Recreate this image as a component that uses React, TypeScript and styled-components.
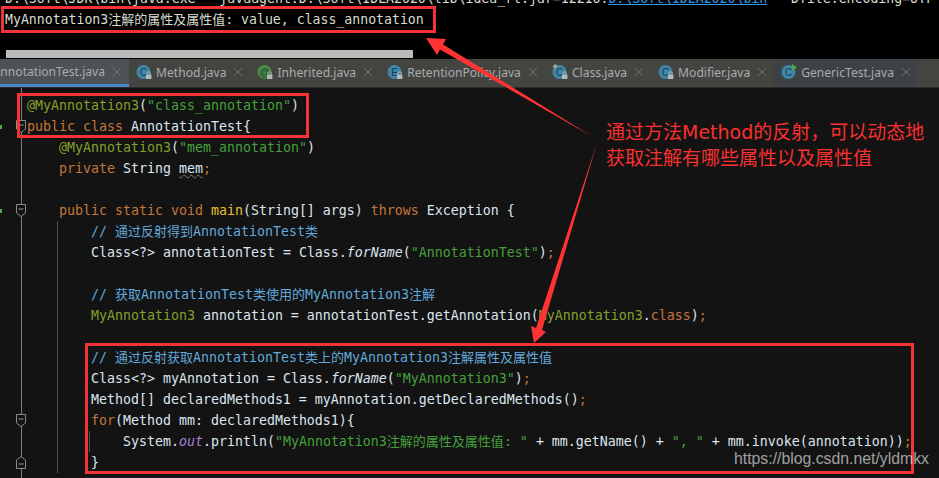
import React, { ReactNode } from "react";
import styled, { createGlobalStyle } from "styled-components";

const MONO = `"DejaVu Sans Mono", "Noto Sans CJK SC", monospace`;

const Global = createGlobalStyle`
  html, body {
    margin: 0;
    background: #131313;
  }
`;

type TabIconProps = {
  letter: string;
  color?: string;
  lock?: boolean;
  run?: boolean;
  pin?: boolean;
};

const TabIcon = ({ letter, color = "#3f86a8", lock, run, pin }: TabIconProps) => (
  <svg width="16" height="16" viewBox="0 0 16 16">
    <circle cx="7.5" cy="8" r="7" fill={color} />
    <text x="7.5" y="11.5" textAnchor="middle" fontFamily="Liberation Sans, sans-serif" fontSize="10" fill="#20394a">
      {letter}
    </text>
    {lock && (
      <g>
        <path d="M11 10.5V9.5a1.7 1.7 0 0 1 3.4 0v1" fill="none" stroke="#b5b8ba" strokeWidth="1" />
        <rect x="10" y="10.5" width="5.4" height="4.5" fill="#b5b8ba" />
      </g>
    )}
    {run && <path d="M11 0l5 3.5-5 3.5z" fill="#4ea84a" />}
    {pin && <path d="M0.5 2.5l2.5-2.5 3 2-3 3z" fill="#9a9da0" />}
  </svg>
);

const CloseIcon = () => (
  <svg width="8" height="8" viewBox="0 0 8 8">
    <path d="M0 0l8 8M8 0l-8 8" stroke="#6d7072" strokeWidth="1" />
  </svg>
);

const FoldMark = ({ up }: { up?: boolean }) => (
  <svg width="10" height="13" viewBox="0 0 10 13">
    {up ? (
      <path d="M0.5 12.5V4L5 0.5 9.5 4v8.5z" fill="#131313" stroke="#8a8a8a" />
    ) : (
      <path d="M0.5 0.5h9V9L5 12.5 0.5 9z" fill="#131313" stroke="#8a8a8a" />
    )}
    <path d={up ? "M2.5 8h5" : "M2.5 5h5"} stroke="#9a9a9a" />
  </svg>
);

const TABS: { name: string; icon: TabIconProps; dark?: boolean }[] = [
  { name: "Method.java", icon: { letter: "C", lock: true } },
  { name: "Inherited.java", icon: { letter: "@", color: "#4b8f3c", lock: true } },
  { name: "RetentionPolicy.java", icon: { letter: "E", lock: true } },
  { name: "Class.java", icon: { letter: "C", lock: true, pin: true } },
  { name: "Modifier.java", icon: { letter: "C", lock: true } },
  { name: "GenericTest.java", icon: { letter: "C", run: true }, dark: true },
];

// the CJK glyphs in the reference run a little narrower than the mono font size
const Zh = ({ children }: { children: string }) => (
  <>{children.split(/([\u4e00-\u9fff]+)/).map((s, i) => (i % 2 ? <Han key={i}>{s}</Han> : s))}</>
);

type RowProps = {
  guides?: number[];
  fold?: "down" | "up";
  run?: boolean;
  children?: ReactNode;
};

const guideBackground = (guides: number[] = []) =>
  guides.length
    ? guides.map((x) => `linear-gradient(#4e4e4e, #4e4e4e) no-repeat ${x}px 0 / 1px 100%`).join(", ")
    : "none";

const Row = ({ guides, fold, run, children }: RowProps) => (
  <CodeRow $guides={guideBackground(guides)}>
    <Gutter>
      {run ? <RunMark /> : <span />}
      {fold && <FoldMark up={fold === "up"} />}
    </Gutter>
    <Code>{children}</Code>
  </CodeRow>
);

const BODY = [57];

export default function App() {
  return (
    <Page>
      <Global />
      <Console>
        <ConsoleText $cut>
          {`D:\\Soft\\JDK\\bin\\java.exe "-javaagent:D:\\Soft\\IDEA2020\\lib\\idea_rt.jar=12216:`}
          <ConsoleLink>{`D:\\Soft\\IDEA2020\\bin`}</ConsoleLink>
          {`" -Dfile.encoding=UTF-8 -cp D:\\`}
        </ConsoleText>
        <ConsoleText>
          <Zh>MyAnnotation3注解的属性及属性值: value, class_annotation</Zh>
        </ConsoleText>
        <ScrollThumb />
      </Console>

      <TabBar>
        <ActiveTab>
          <TabName>AnnotationTest.java</TabName>
          <CloseIcon />
        </ActiveTab>
        {TABS.map((t) => (
          <Tab key={t.name} $dark={t.dark}>
            <TabIcon {...t.icon} />
            <TabName>{t.name}</TabName>
            <CloseIcon />
          </Tab>
        ))}
      </TabBar>

      <Editor>
        <Row>
          <Ann>@MyAnnotation3</Ann>(<Str>"class_annotation"</Str>)
        </Row>
        <Row fold="down" run>
          <Kw>public class</Kw> AnnotationTest{"{"}
        </Row>
        <Row>
          {"    "}
          <Ann>@MyAnnotation3</Ann>(<Str>"mem_annotation"</Str>)
        </Row>
        <Row>
          {"    "}
          <Kw>private</Kw> String <Unused>mem</Unused>
          <Kw>;</Kw>
        </Row>
        <Row />
        <Row fold="down" run>
          {"    "}
          <Kw>public static void</Kw> <Fn>main</Fn>(String[] args) <Kw>throws</Kw> Exception {"{"}
        </Row>
        <Row guides={BODY}>
          {"        "}
          <Cm>
            <Zh>// 通过反射得到AnnotationTest类</Zh>
          </Cm>
        </Row>
        <Row guides={BODY}>
          {"        "}Class{"<?>"} annotationTest = Class.<Em>forName</Em>(<Str>"AnnotationTest"</Str>)<Kw>;</Kw>
        </Row>
        <Row guides={BODY} />
        <Row guides={BODY}>
          {"        "}
          <Cm>
            <Zh>// 获取AnnotationTest类使用的MyAnnotation3注解</Zh>
          </Cm>
        </Row>
        <Row guides={BODY}>
          {"        "}
          <Ann>MyAnnotation3</Ann> annotation = annotationTest.getAnnotation(<Ann>MyAnnotation3</Ann>.<Kw>class</Kw>)
          <Kw>;</Kw>
        </Row>
        <Row guides={BODY} />
        <Row guides={BODY}>
          {"        "}
          <Cm>
            <Zh>// 通过反射获取AnnotationTest类上的MyAnnotation3注解属性及属性值</Zh>
          </Cm>
        </Row>
        <Row guides={BODY}>
          {"        "}Class{"<?>"} myAnnotation = Class.<Em>forName</Em>(<Str>"MyAnnotation3"</Str>)<Kw>;</Kw>
        </Row>
        <Row guides={BODY}>
          {"        "}Method[] declaredMethods1 = myAnnotation.getDeclaredMethods()<Kw>;</Kw>
        </Row>
        <Row guides={BODY} fold="down">
          {"        "}
          <Kw>for</Kw>(Method mm: declaredMethods1){"{"}
        </Row>
        <Row guides={[57, 89]}>
          {"            "}System.<Out>out</Out>.println(
          <Str>
            <Zh>"MyAnnotation3注解的属性及属性值: "</Zh>
          </Str>{" "}
          + mm.getName() + <Str>", "</Str> + mm.invoke(annotation))
          <Kw>;</Kw>
        </Row>
        <Row guides={BODY} fold="up">
          {"        "}
          {"}"}
        </Row>
      </Editor>

      <RedBox $left={1} $top={6} $width={435} $height={27} />
      <RedBox $left={17} $top={93} $width={292} $height={45} />
      <RedBox $left={85} $top={343} $width={829} $height={131} />

      <Arrows viewBox="0 0 939 478" width="939" height="478">
        <polygon points="426,38 446,39 443,44.5 593,137 440,49.6 437,55" fill="#ff3333" />
        <polygon points="534,343 546,332 542,330 597,143 536,328 531,326" fill="#ff3333" />
      </Arrows>

      <Note>
        通过方法Method的反射，可以动态地
        <br />
        获取注解有哪些属性以及属性值
      </Note>
      <Watermark>https://blog.csdn.net/yldmkx</Watermark>
    </Page>
  );
}

const Page = styled.div`
  position: relative;
  width: 939px;
  height: 478px;
  overflow: hidden;
  background: #131313;
`;

const Han = styled.span`
  font-size: 13px;
`;

const Console = styled.div`
  height: 59px;
  box-sizing: border-box;
  padding-left: 5px;
  background: #000;
  overflow: hidden;
`;
const ConsoleText = styled.div<{ $cut?: boolean }>`
  font-family: ${MONO};
  font-size: 13.2px;
  line-height: 21px;
  white-space: pre;
  color: #d6dccf;
  margin-top: ${(p) => (p.$cut ? "-12px" : "0")};
  height: ${(p) => (p.$cut ? "21px" : "auto")};
`;
const ConsoleLink = styled.span`
  color: #2f9be8;
  text-decoration: underline;
`;
const ScrollThumb = styled.div`
  width: 407px;
  height: 8px;
  margin: 20px 0 0 1px;
  background: #bcbcbc;
`;

const TabBar = styled.div`
  display: flex;
  height: 29px;
  box-sizing: border-box;
  background: #444541;
  border-bottom: 1px solid #2b2b2b;
`;
const Tab = styled.div<{ $dark?: boolean }>`
  flex: none;
  display: flex;
  align-items: center;
  gap: 4px;
  padding: 0 8px 2px 7px;
  background: ${(p) => (p.$dark ? "#3e4245" : "transparent")};
  svg {
    flex: none;
  }
  svg:last-child {
    margin-left: 4px;
  }
`;
const ActiveTab = styled(Tab)`
  width: 129px;
  box-sizing: border-box;
  justify-content: flex-end;
  overflow: hidden;
  background: #4e5254;
  border-bottom: 3px solid #4a88c7;
  padding: 0 8px 0 0;
`;
const TabName = styled.span`
  flex: none;
  font-family: "Noto Sans", "Open Sans", sans-serif;
  font-size: 12.1px;
  color: #a8acaf;
`;

const Editor = styled.div`
  height: 390px;
  box-sizing: border-box;
  padding-top: 7px;
  overflow: hidden;
  background: linear-gradient(#7c7c7c, #7c7c7c) no-repeat 21px 0 / 1px 100%;
`;
const CodeRow = styled.div<{ $guides: string }>`
  display: flex;
  height: 21px;
  background: ${(p) => p.$guides};
`;
const Gutter = styled.div`
  flex: none;
  width: 27px;
  box-sizing: border-box;
  padding-right: 1px;
  display: flex;
  align-items: center;
  justify-content: space-between;
`;
const RunMark = styled.span`
  width: 2px;
  height: 4px;
  background: #4ea84a;
`;
const Code = styled.div`
  font-family: ${MONO};
  font-size: 13.29px;
  line-height: 21px;
  white-space: pre;
  color: #dbe6ef;
`;

const Kw = styled.span`
  color: #c4763a;
`;
const Str = styled.span`
  color: #45a03c;
`;
const Ann = styled.span`
  color: #83a02c;
`;
const Cm = styled.span`
  color: #62a9dc;
`;
const Fn = styled.span`
  color: #e6c02e;
`;
const Em = styled.span`
  font-style: italic;
`;
const Out = styled.span`
  font-style: italic;
  color: #a87ed6;
`;
const Unused = styled.span`
  text-decoration: underline wavy #777;
  text-decoration-thickness: 1px;
`;

const RedBox = styled.div<{ $left: number; $top: number; $width: number; $height: number }>`
  position: absolute;
  left: ${(p) => p.$left}px;
  top: ${(p) => p.$top}px;
  width: ${(p) => p.$width}px;
  height: ${(p) => p.$height}px;
  box-sizing: border-box;
  border: 3px solid #f53337;
`;
const Arrows = styled.svg`
  position: absolute;
  left: 0;
  top: 0;
`;
const Note = styled.div`
  position: absolute;
  left: 606px;
  top: 119px;
  font-family: "DejaVu Sans", "Noto Sans CJK SC", sans-serif;
  font-size: 19px;
  line-height: 26px;
  white-space: nowrap;
  color: #fb3030;
`;
const Watermark = styled.div`
  position: absolute;
  left: 734px;
  top: 449px;
  font-family: "Liberation Sans", sans-serif;
  font-size: 15.8px;
  line-height: 20px;
  white-space: nowrap;
  color: rgba(255, 255, 255, 0.6);
`;
